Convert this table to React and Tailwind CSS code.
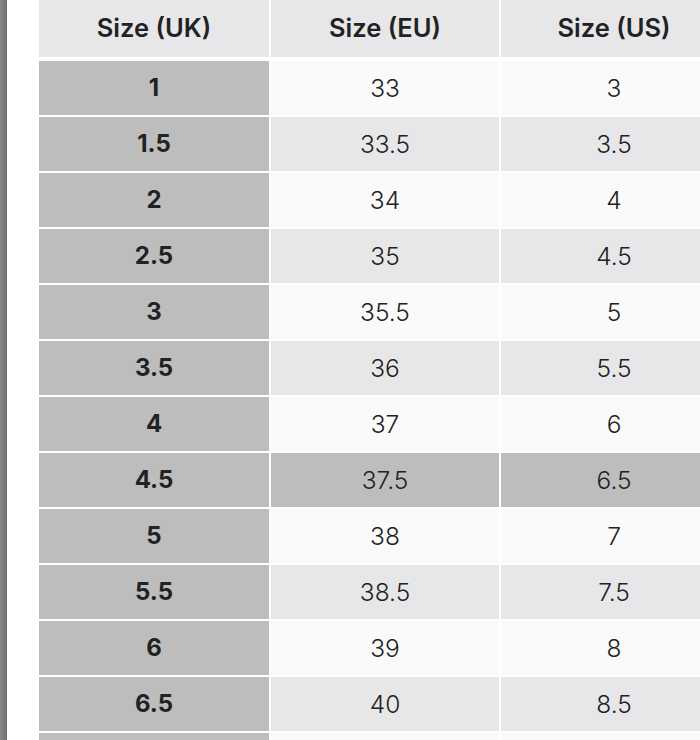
import React from "react";

const rows = [
  ["1", "33", "3"],
  ["1.5", "33.5", "3.5"],
  ["2", "34", "4"],
  ["2.5", "35", "4.5"],
  ["3", "35.5", "5"],
  ["3.5", "36", "5.5"],
  ["4", "37", "6"],
  ["4.5", "37.5", "6.5"],
  ["5", "38", "7"],
  ["5.5", "38.5", "7.5"],
  ["6", "39", "8"],
  ["6.5", "40", "8.5"],
  ["", "", ""],
];

export default function App() {
  return (
    <div
      className="flex h-[740px] w-[700px] overflow-hidden bg-white text-[#222]"
      style={{ fontFamily: "Inter, 'Noto Sans', sans-serif" }}
    >
      <div className="w-[7px] shrink-0 bg-gradient-to-r from-[#8a8a8a] to-[#6c6c6c]" />
      <div className="w-[32px] shrink-0" />
      <div className="flex shrink-0 flex-col">
        <div className="grid grid-cols-[230px_228px_226px] gap-x-[2px]">
          {["Size (UK)", "Size (EU)", "Size (US)"].map((h) => (
            <div
              key={h}
              className="flex h-[57px] items-center justify-center bg-[#e7e7e9] pb-[1px] text-[25.5px] font-semibold"
            >
              {h}
            </div>
          ))}
        </div>
        <div className="mt-[4px] grid grid-cols-[230px_228px_226px] gap-[2px]">
          {rows.map((r, i) => {
            const hl = r[0] === "4.5";
            const bg = hl ? "bg-[#bdbdbd]" : i % 2 === 0 ? "bg-[#fafafa]" : "bg-[#e7e7e9]";
            return (
              <React.Fragment key={i}>
                <div className="flex h-[54px] items-center justify-center bg-[#bdbdbd] text-[24px] font-bold">
                  {r[0]}
                </div>
                <div className={`flex h-[54px] items-center justify-center text-[24.5px] font-light ${bg}`}>
                  {r[1]}
                </div>
                <div className={`flex h-[54px] items-center justify-center text-[24.5px] font-light ${bg}`}>
                  {r[2]}
                </div>
              </React.Fragment>
            );
          })}
        </div>
      </div>
    </div>
  );
}
